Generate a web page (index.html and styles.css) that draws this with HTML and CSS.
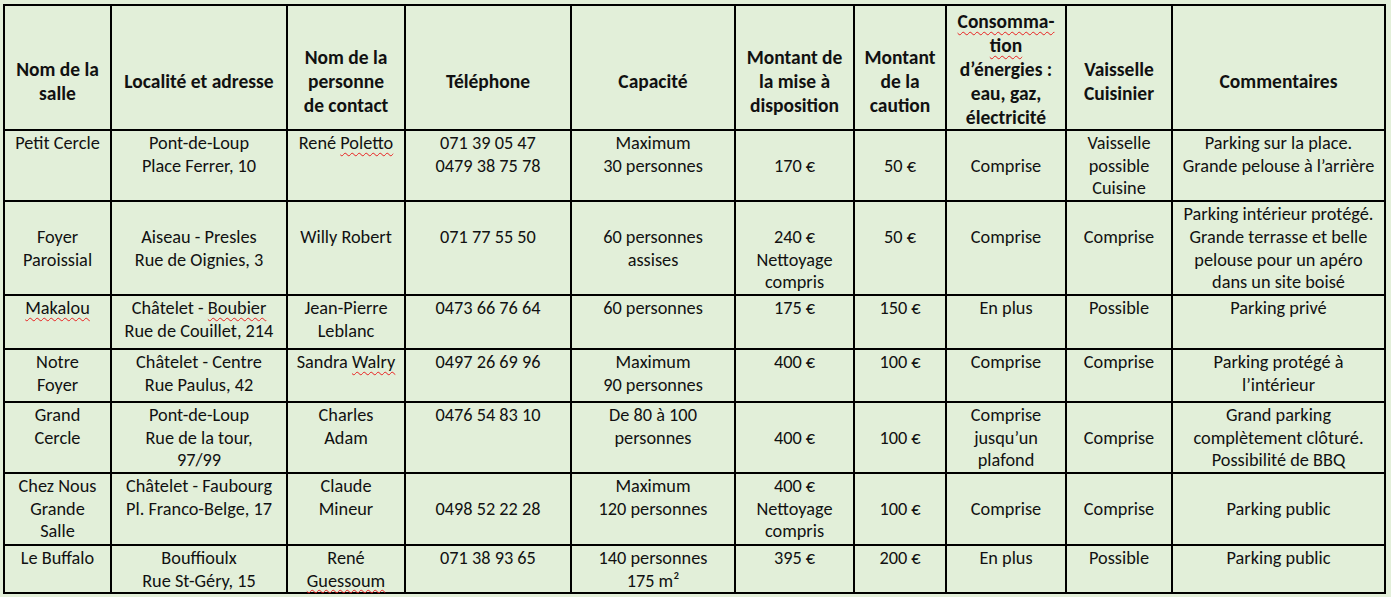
FILE: index.html
```html
<!DOCTYPE html>
<html lang="fr">
<head>
<meta charset="utf-8">
<title>Salles</title>
<link rel="stylesheet" href="styles.css">
</head>
<body>
<table class="grid">
  <colgroup>
    <col class="w1"><col class="w2"><col class="w3"><col class="w4"><col class="w5">
    <col class="w6"><col class="w7"><col class="w8"><col class="w9"><col class="w10">
  </colgroup>
  <thead>
    <tr class="head">
      <th class="h">Nom de la<br>salle</th>
      <th class="h">Localité et adresse</th>
      <th class="h">Nom de la<br>personne<br>de contact</th>
      <th class="h">Téléphone</th>
      <th class="h">Capacité</th>
      <th class="h">Montant de<br>la mise à<br>disposition</th>
      <th class="h">Montant<br>de la<br>caution</th>
      <th class="h full"><span class="sp">Consomma-</span><br><span class="sp">tion</span><br>d’énergies :<br>eau, gaz,<br>électricité</th>
      <th class="h">Vaisselle<br>Cuisinier</th>
      <th class="h">Commentaires</th>
    </tr>
  </thead>
  <tbody>
    <tr class="r1">
      <td>Petit Cercle</td>
      <td>Pont-de-Loup<br>Place Ferrer, 10</td>
      <td>René <span class="sp">Poletto</span></td>
      <td>071 39 05 47<br>0479 38 75 78</td>
      <td>Maximum<br>30 personnes</td>
      <td class="s1">170 €</td>
      <td class="s1">50 €</td>
      <td class="s1">Comprise</td>
      <td>Vaisselle<br>possible<br>Cuisine</td>
      <td>Parking sur la place.<br>Grande pelouse à l’arrière</td>
    </tr>
    <tr class="r2">
      <td class="s1">Foyer<br>Paroissial</td>
      <td class="s1">Aiseau - Presles<br>Rue de Oignies, 3</td>
      <td class="s1">Willy Robert</td>
      <td class="s1">071 77 55 50</td>
      <td class="s1">60 personnes<br>assises</td>
      <td class="s1">240 €<br>Nettoyage<br>compris</td>
      <td class="s1">50 €</td>
      <td class="s1">Comprise</td>
      <td class="s1">Comprise</td>
      <td>Parking intérieur protégé.<br>Grande terrasse et belle<br>pelouse pour un apéro<br>dans un site boisé</td>
    </tr>
    <tr class="r3">
      <td><span class="sp">Makalou</span></td>
      <td>Châtelet - <span class="sp">Boubier</span><br>Rue de Couillet, 214</td>
      <td>Jean-Pierre<br>Leblanc</td>
      <td>0473 66 76 64</td>
      <td>60 personnes</td>
      <td>175 €</td>
      <td>150 €</td>
      <td>En plus</td>
      <td>Possible</td>
      <td>Parking privé</td>
    </tr>
    <tr class="r4">
      <td>Notre<br>Foyer</td>
      <td>Châtelet - Centre<br>Rue Paulus, 42</td>
      <td>Sandra <span class="sp">Walry</span></td>
      <td>0497 26 69 96</td>
      <td>Maximum<br>90 personnes</td>
      <td>400 €</td>
      <td>100 €</td>
      <td>Comprise</td>
      <td>Comprise</td>
      <td>Parking protégé à<br>l’intérieur</td>
    </tr>
    <tr class="r5">
      <td>Grand<br>Cercle</td>
      <td>Pont-de-Loup<br>Rue de la tour,<br>97/99</td>
      <td>Charles<br>Adam</td>
      <td>0476 54 83 10</td>
      <td>De 80 à 100<br>personnes</td>
      <td class="s1">400 €</td>
      <td class="s1">100 €</td>
      <td>Comprise<br>jusqu’un<br>plafond</td>
      <td class="s1">Comprise</td>
      <td>Grand parking<br>complètement clôturé.<br>Possibilité de BBQ</td>
    </tr>
    <tr class="r6">
      <td>Chez Nous<br>Grande<br>Salle</td>
      <td>Châtelet - Faubourg<br>Pl. Franco-Belge, 17</td>
      <td>Claude<br>Mineur</td>
      <td class="s1">0498 52 22 28</td>
      <td>Maximum<br>120 personnes</td>
      <td>400 €<br>Nettoyage<br>compris</td>
      <td class="s1">100 €</td>
      <td class="s1">Comprise</td>
      <td class="s1">Comprise</td>
      <td class="s1">Parking public</td>
    </tr>
    <tr class="r7">
      <td>Le Buffalo</td>
      <td>Bouffioulx<br>Rue St-Géry, 15</td>
      <td>René<br><span class="sp">Guessoum</span></td>
      <td>071 38 93 65</td>
      <td>140 personnes<br>175 m²</td>
      <td>395 €</td>
      <td>200 €</td>
      <td>En plus</td>
      <td>Possible</td>
      <td>Parking public</td>
    </tr>
  </tbody>
</table>
</body>
</html>
```
FILE: styles.css
```css
html, body {
  margin: 0;
  padding: 0;
  background: #e2efd9;
}
body {
  padding: 4px 0 0 3px;
  font-family: Carlito, Calibri, Lato, "Liberation Sans", sans-serif;
  color: #111;
}
.grid {
  border-collapse: collapse;
  table-layout: fixed;
  width: 1383px;
  border: 2px solid #000;
}
.w1 { width: 107px; }
.w2 { width: 176px; }
.w3 { width: 118px; }
.w4 { width: 166px; }
.w5 { width: 164px; }
.w6 { width: 119px; }
.w7 { width: 92px; }
.w8 { width: 120px; }
.w9 { width: 106px; }
.w10 { width: 213px; }

.grid th, .grid td {
  border: 2px solid #000;
  text-align: center;
  padding: 0 1px;
  box-sizing: border-box;
  white-space: nowrap;
}
.grid th {
  font-weight: 700;
  font-size: 19.5px;
  line-height: 24px;
  vertical-align: middle;
  padding-top: 27px;
}
.grid th.full {
  padding-top: 3px;
}
.grid td {
  font-size: 18.3px;
  line-height: 22.7px;
  vertical-align: top;
  padding-top: 1px;
}
.grid td.s1 {
  padding-top: 23.7px;
}
.head { height: 123px; }
.r1 { height: 71px; }
.r2 { height: 93px; }
.r3 { height: 54px; }
.r4 { height: 53px; }
.r5 { height: 71px; }
.r6 { height: 72px; }
.r7 { height: 46px; }
.r7 .sp { text-underline-offset: 2px; }

.sp {
  text-decoration: underline wavy #e81f1f;
  text-decoration-thickness: 1px;
  text-underline-offset: 3px;
  text-decoration-skip-ink: none;
}
```
